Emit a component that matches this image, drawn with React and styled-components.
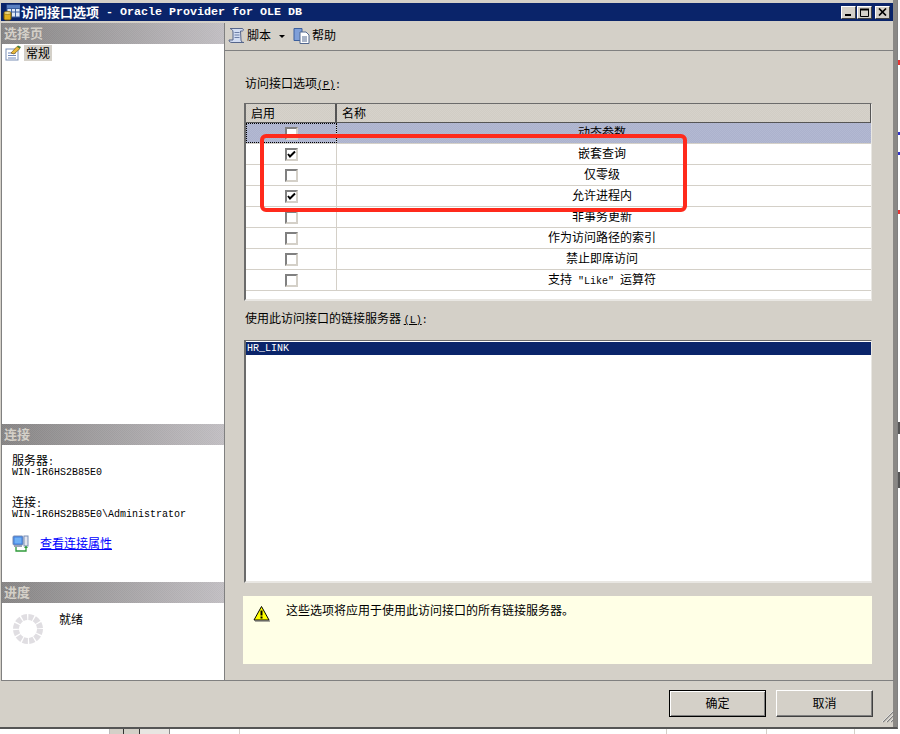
import React from "react";
import styled, { createGlobalStyle } from "styled-components";

const Global = createGlobalStyle`
  html, body { margin: 0; padding: 0; background: #fff; overflow: hidden; }
  body { font-family: "Noto Sans CJK SC", "Liberation Sans", sans-serif; font-size: 12px; color: #000; }
  * { box-sizing: border-box; }
`;

const dither = "repeating-conic-gradient(rgba(255,255,255,.05) 0 25%, rgba(0,0,0,.015) 0 50%) 0 0 / 2px 2px";

const Screen = styled.div`
  position: relative; width: 900px; height: 734px; display: flex; flex-direction: column; overflow: hidden;
`;
const Top = styled.div`display: flex; height: 729px;`;
const Dialog = styled.div`
  width: 898px; height: 729px; background: #d4d0c8; display: flex; flex-direction: column;
  padding: 3px 0 0 1px; border-bottom: 2px solid #555; border-right: 1px solid #808080;
  box-shadow: inset -4px 0 0 #8a8885, inset -3px 0 0 #6e6c69;
`;
const RightEdge = styled.div`
  width: 2px; height: 729px;
  background: linear-gradient(#fff 0 60px, #e33 60px 65px, #fff 65px 132px, #33c 132px 135px, #fff 135px 152px, #33c 152px 155px, #fff 155px 210px, #e33 210px 214px, #fff 214px 422px, #555 422px 434px, #fff 434px 472px, #555 472px 488px, #fff 488px);
`;
const Bottom = styled.div`display: flex; height: 5px; background: #fff;`;
const BottomCell = styled.div`
  width: ${p => p.$w}px; height: 5px; border-right: 1px solid ${p => p.$line || "#d4d0c8"};
  background: ${p => p.$bg || "transparent"};
`;

const TitleBar = styled.div`
  width: 892px; height: 18px; background: #0a246a; display: flex; align-items: center; padding: 0 2px 0 2px;
  color: #fff; font-weight: 700; font-size: 13px; line-height: 18px; white-space: pre;
`;
const TitleIcon = styled.svg`width: 17px; height: 17px; margin-right: 1px; flex: none;`;
const TitleLatin = styled.span`font-family: "Liberation Mono", monospace; font-size: 11.67px; font-weight: 700; margin-left: 7px;`;
const TitleButtons = styled.div`margin-left: auto; display: flex; padding-right: 1px;`;
const WinButton = styled.span`
  width: 15px; height: 13px; margin-left: ${p => p.$gap || 0}px; background: #d4d0c8; display: flex; align-items: center; justify-content: center;
  border: 1px solid; border-color: #fff #404040 #404040 #fff;
`;

const Divider = styled.div`height: 2px; width: 892px;`;
const Body = styled.div`display: flex; width: 893px; height: 658px;`;

const Sidebar = styled.aside`
  width: 224px; flex: none; background: #fff; border: 1px solid #808080; border-top: 0; display: flex; flex-direction: column;
`;
const SideHead = styled.div`
  height: 21px; flex: none; padding-left: 2px; font-weight: 700; font-size: 13px; line-height: 20px; color: #d4d0c8;
  background: ${dither}, linear-gradient(90deg, #868484, #c2bfc3);
`;
const Pages = styled.div`height: 380px; flex: none; padding: 0 0 0 3px; display: flex; align-items: flex-start;`;
const PageIcon = styled.svg`width: 17px; height: 16px; margin-top: 1px; margin-right: 2px; flex: none;`;
const PageName = styled.span`background: #d4d0c8; height: 16px; line-height: 16px; padding: 0 2px; margin-top: 1px;`;
const ConnectInfo = styled.div`height: 137px; flex: none; padding: 8px 0 0 10px; display: flex; flex-direction: column;`;
const InfoLabel = styled.div`height: 14px; line-height: 14px; margin-top: ${p => p.$top || 0}px;`;
const Mono = styled.span`font-family: "Liberation Mono", monospace; font-size: 10px;`;
const InfoValue = styled.div`height: 12px; line-height: 12px; font-family: "Liberation Mono", monospace; font-size: 10px; white-space: pre;`;
const LinkRow = styled.div`display: flex; align-items: center; margin-top: 14px; height: 17px;`;
const LinkIcon = styled.svg`width: 17px; height: 17px; margin-right: 11px; flex: none;`;
const PropLink = styled.a`color: #0000ff; text-decoration: underline; line-height: 14px; margin-top: -2px;`;
const Progress = styled.div`flex: 1; display: flex; padding: 9px 0 0 10px;`;
const Spinner = styled.svg`width: 32px; height: 32px; flex: none; margin-top: 1px;`;
const ProgressText = styled.span`margin-left: 15px; line-height: 14px; margin-top: 0;`;

const Main = styled.main`flex: 1; display: flex; flex-direction: column; border-bottom: 1px solid #808080; min-width: 0;`;
const Toolbar = styled.div`
  height: 28px; flex: none; border-bottom: 1px solid #808080; display: flex; align-items: center; padding: 0 0 3px 3px;
`;
const ToolIcon = styled.svg`width: 17px; height: 17px; flex: none; margin-right: 2px;`;
const ToolText = styled.span`line-height: 14px;`;
const Caret = styled.span`
  width: 0; height: 0; margin: 2px 8px 0 8px; border: 3px solid transparent; border-top: 3px solid #000; border-bottom: 0;
`;
const Content = styled.div`padding: 25px 0 0 19px; display: flex; flex-direction: column;`;
const FieldLabel = styled.div`height: 14px; line-height: 14px; white-space: pre; padding-left: 1px; margin-top: ${p => p.$top || 0}px;`;
const Under = styled.span`font-family: "Liberation Mono", monospace; font-size: 10px; text-decoration: underline; text-underline-offset: 1px;`;
const OptionsTable = styled.div`
  width: 628px; height: 198px; margin-top: 13px; background: #fff; display: flex; flex-direction: column;
  border: 2px solid; border-color: #6b6b6b #e9e7e3 #e9e7e3 #6b6b6b; border-top-width: 1px; border-right-width: 1px;
`;
const HeadRow = styled.div`display: flex; height: 19px; flex: none; border-bottom: 1px solid #555; border-right: 1px solid #555;`;
const HeadCell = styled.div`
  width: ${p => p.$w ? p.$w + "px" : "auto"}; flex: ${p => p.$w ? "none" : 1}; padding-left: 5px; line-height: 18px;
  background: ${dither}, #d4d0c8; border-right: ${p => p.$w ? "2px solid #555" : 0};
`;
const Row = styled.div`
  display: flex; height: 21px; flex: none; border-bottom: 1px solid #d4d0c8;
  background: ${p => p.$sel ? `${dither}, #afb5d0` : "#fff"};
`;
const CheckCell = styled.div`
  width: 91px; flex: none; display: flex; align-items: center; justify-content: center; padding-right: 0;
  border-right: 1px solid #d4d0c8;
  outline: ${p => p.$focus ? "1px dotted #000" : "none"}; outline-offset: -1px;
`;
const Box = styled.span`
  width: 13px; height: 13px; background: #fff; display: flex; align-items: center; justify-content: center;
  border: 2px solid; border-color: #808080 #d4d0c8 #d4d0c8 #808080;
`;
const NameCell = styled.div`flex: 1; text-align: center; line-height: 18px; white-space: pre; padding-right: 4px;`;
const ServerList = styled.div`
  width: 628px; height: 243px; margin-top: 15px; background: #fff; padding-top: 1px;
  border: 2px solid; border-color: #6b6b6b #e9e7e3 #e9e7e3 #6b6b6b; border-top-width: 1px; border-right-width: 1px;
`;
const ServerItem = styled.div`
  height: 13px; background: #0a246a; color: #fff; font-family: "Liberation Mono", monospace; font-size: 10px; line-height: 13px; padding-left: 1px;
`;
const Notice = styled.div`
  width: 629px; height: 68px; margin: 13px 0 0 -1px; background: #ffffe6; display: flex; padding: 9px 0 0 10px;
`;
const WarnIcon = styled.svg`width: 17px; height: 17px; flex: none; margin-right: 16px;`;
const NoticeText = styled.span`line-height: 14px; margin-top: -2px;`;

const Footer = styled.footer`
  position: relative; flex: 1; display: flex; justify-content: flex-end; gap: 10px; padding: 9px 21px 0 0; width: 893px;
`;
const Action = styled.button`
  width: 97px; height: 27px; background: #d4d0c8; font: inherit; color: #000; padding: 0 0 2px; line-height: 14px;
  border: 1px solid; border-color: ${p => p.$def ? "#000" : "#fff #404040 #404040 #fff"};
  box-shadow: ${p => p.$def ? "inset 1px 1px 0 #fff, inset -1px -1px 0 #808080" : "inset -1px -1px 0 #808080"};
`;
const Grip = styled.svg`position: absolute; right: 0; bottom: 4px; width: 12px; height: 13px;`;

const Annotation = styled.div`
  position: absolute; left: 260px; top: 134px; width: 427px; height: 78px;
  border: 4px solid #ff2a1c; border-radius: 6px; pointer-events: none;
`;

const rows = [
  { n: "动态参数", sel: true },
  { n: "嵌套查询", c: true },
  { n: "仅零级" },
  { n: "允许进程内", c: true },
  { n: "非事务更新" },
  { n: "作为访问路径的索引" },
  { n: "禁止即席访问" },
  { n: <>支持<Mono> "Like" </Mono>运算符</> },
];

const Check = () => (
  <svg width="9" height="9" viewBox="0 0 9 9"><path d="M1 4 L3 6.5 L8 1.5" fill="none" stroke="#000" strokeWidth="2" /></svg>
);

export default function App() {
  return (
    <Screen>
      <Global />
      <Top>
        <Dialog>
          <TitleBar>
            <TitleIcon viewBox="0 0 17 17">
              <rect x="4" y="1" width="13" height="12" fill="#dfe8f7" stroke="#3b5f9e" />
              <path d="M4 4.5h13M4 8h13M8.5 1v12M12.5 1v12" stroke="#3b5f9e" />
              <rect x="4" y="1" width="13" height="3" fill="#5a7fc0" />
              <rect x="1" y="8" width="7" height="8" rx="1.5" fill="#e0b020" stroke="#7a5a00" />
              <ellipse cx="4.5" cy="9" rx="3.5" ry="1.4" fill="#f7e08a" stroke="#7a5a00" strokeWidth=".6" />
            </TitleIcon>
            访问接口选项<TitleLatin>- Oracle Provider for OLE DB</TitleLatin>
            <TitleButtons>
              <WinButton>
                <svg width="11" height="9" viewBox="0 0 11 9"><rect x="2" y="6" width="6" height="2" fill="#000" /></svg>
              </WinButton>
              <WinButton $gap={1}>
                <svg width="11" height="9" viewBox="0 0 11 9"><path d="M1.5 1.5h8v7h-8z" fill="none" stroke="#000" /><path d="M1 1.5h9" stroke="#000" strokeWidth="2" /></svg>
              </WinButton>
              <WinButton $gap={3}>
                <svg width="9" height="8" viewBox="0 0 9 8"><path d="M1 0.5L8 7.5M8 0.5L1 7.5" stroke="#000" strokeWidth="1.7" /></svg>
              </WinButton>
            </TitleButtons>
          </TitleBar>
          <Divider />
          <Body>
            <Sidebar>
              <SideHead>选择页</SideHead>
              <Pages>
                <PageIcon viewBox="0 0 17 16">
                  <rect x="1" y="4" width="12" height="11" fill="#fff" stroke="#7a8fb5" />
                  <path d="M3 8h8M3 10.5h8M3 13h8" stroke="#6f86b8" />
                  <path d="M6 8L12 1.5l3 2L9 9z" fill="#e8b93a" stroke="#7a5a10" strokeWidth=".7" />
                  <path d="M12 1.5l3 2 1-1.5-3-1.5z" fill="#3b7a3b" />
                </PageIcon>
                <PageName>常规</PageName>
              </Pages>
              <SideHead>连接</SideHead>
              <ConnectInfo>
                <InfoLabel>服务器<Mono>:</Mono></InfoLabel>
                <InfoValue>WIN-1R6HS2B85E0</InfoValue>
                <InfoLabel $top={16}>连接<Mono>:</Mono></InfoLabel>
                <InfoValue>WIN-1R6HS2B85E0\Administrator</InfoValue>
                <LinkRow>
                  <LinkIcon viewBox="0 0 17 17">
                    <rect x="1" y="1" width="10" height="9" rx="1" fill="#3f7fe0" stroke="#7a8fb5" />
                    <rect x="2.5" y="2.5" width="7" height="6" fill="#6fb0f5" />
                    <rect x="2" y="10" width="8" height="2" fill="#9aa3b5" />
                    <rect x="12" y="1" width="4" height="10" fill="#e4e6ee" stroke="#7a8fb5" />
                    <path d="M4 12v4h10v-4" fill="none" stroke="#2f9a3a" strokeWidth="1.3" />
                    <path d="M12 13l2-2.5 2 2.5z" fill="#2f9a3a" />
                  </LinkIcon>
                  <PropLink>查看连接属性</PropLink>
                </LinkRow>
              </ConnectInfo>
              <SideHead>进度</SideHead>
              <Progress>
                <Spinner viewBox="0 0 32 32">
                  <circle cx="16" cy="16" r="12" fill="none" stroke="#e0dee2" strokeWidth="6" strokeDasharray="5 1.283" />
                </Spinner>
                <ProgressText>就绪</ProgressText>
              </Progress>
            </Sidebar>
            <Main>
              <Toolbar>
                <ToolIcon viewBox="0 0 17 17">
                  <path d="M2 1.500H14c1.500 0 2 2 .5 2.500H12.500L13 13c0 1.500 1 2.500 3 2.500H4C2 15.500 1 14.500 1 13H5V5C5 3 3.500 2 2 1.500z" fill="#d3ddf2" stroke="#55658a" strokeWidth="1" />
                  <path d="M6.500 5.500h5M6.500 8h5M6.500 10.500h5" stroke="#6c7ea6" />
                </ToolIcon>
                <ToolText>脚本</ToolText>
                <Caret />
                <ToolIcon viewBox="0 0 17 17">
                  <path d="M1 1.500h8v12H1z" fill="#7f9fd8" stroke="#3b5f9e" />
                  <path d="M7 5h6l3 3v8.500H7z" fill="#fff" stroke="#53688f" />
                  <path d="M9 10h5M9 12h5M9 14h5" stroke="#53688f" />
                </ToolIcon>
                <ToolText>帮助</ToolText>
              </Toolbar>
              <Content>
                <FieldLabel>访问接口选项<Under>(P)</Under><Mono>:</Mono></FieldLabel>
                <OptionsTable>
                  <HeadRow>
                    <HeadCell $w={91}>启用</HeadCell>
                    <HeadCell>名称</HeadCell>
                  </HeadRow>
                  {rows.map((r, i) => (
                    <Row key={i} $sel={r.sel}>
                      <CheckCell $focus={r.sel}>
                        <Box>{r.c && <Check />}</Box>
                      </CheckCell>
                      <NameCell>{r.n}</NameCell>
                    </Row>
                  ))}
                </OptionsTable>
                <FieldLabel $top={10}>使用此访问接口的链接服务器 <Under>(L)</Under><Mono>:</Mono></FieldLabel>
                <ServerList>
                  <ServerItem>HR_LINK</ServerItem>
                </ServerList>
                <Notice>
                  <WarnIcon viewBox="0 0 17 17">
                    <path d="M8.500 1.500L16 15H1z" fill="#ffff00" stroke="#000" />
                    <path d="M2 16h15" stroke="#555" />
                    <path d="M8.500 5.500v5" stroke="#000" strokeWidth="2" />
                    <rect x="7.500" y="11.500" width="2" height="2" fill="#000" />
                  </WarnIcon>
                  <NoticeText>这些选项将应用于使用此访问接口的所有链接服务器。</NoticeText>
                </Notice>
              </Content>
            </Main>
          </Body>
          <Footer>
            <Action $def>确定</Action>
            <Action>取消</Action>
            <Grip viewBox="0 0 12 13">
              <path d="M1 12L12 1M5 12L12 5M9 12L12 9" stroke="#808080" strokeWidth="1.2" />
              <path d="M0 12L11 1M4 12L11 5M8 12L11 9" stroke="#fff" strokeWidth=".6" />
            </Grip>
          </Footer>
        </Dialog>
        <RightEdge />
      </Top>
      <Bottom>
        <BottomCell $w={110} $line="#bbb" />
        <BottomCell $w={14} $bg="#d4d0c8" $line="#333" />
        <BottomCell $w={16} $bg="#d4d0c8" $line="#333" />
        <BottomCell $w={30} $bg="#e8e6e2" $line="#888" />
        <BottomCell $w={70} />
        <BottomCell $w={427} />
        <BottomCell $w={100} />
        <BottomCell $w={88} />
      </Bottom>
      <Annotation />
    </Screen>
  );
}
